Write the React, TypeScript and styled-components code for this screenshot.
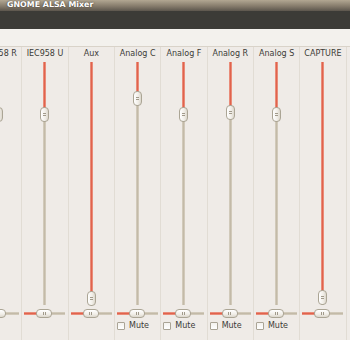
import React from "react";
import styled, { createGlobalStyle } from "styled-components";

const GlobalStyle = createGlobalStyle`
  html, body {
    margin: 0;
    padding: 0;
  }
  body {
    width: 350px;
    height: 340px;
    overflow: hidden;
    background: #efebe7;
    font-family: "DejaVu Sans", sans-serif;
  }
`;

const Window = styled.div`
  width: 350px;
  height: 340px;
  overflow: hidden;
  display: flex;
  flex-direction: column;
  background: #efebe7;
`;

const TitleBar = styled.div`
  height: 11px;
  flex: none;
  padding-left: 7px;
  background: linear-gradient(#b2a792, #867c6c 55%, #5c564d);
  color: #fff;
  font-family: "DejaVu Sans", sans-serif;
  font-weight: bold;
  font-size: 7.9px;
  line-height: 9px;
  text-shadow: 0 0 2px #3a352e;
  white-space: nowrap;
  overflow: hidden;
`;

const MenuBand = styled.div`
  height: 18px;
  flex: none;
  background: #3c3b37;
`;

const Toolbar = styled.div`
  height: 17px;
  flex: none;
  background: #f3f1ed;
  border-bottom: 1px solid #d9d3c9;
`;

// the strip list is scrolled a little, so the first channel is cut at the left
const Mixer = styled.div`
  flex: 1;
  display: flex;
  margin-left: -24px;
`;

const Column = styled.div`
  flex: none;
  width: 46.33px;
  box-sizing: border-box;
  border-right: 1px solid #e1dcd4;
  display: flex;
  flex-direction: column;
  align-items: center;
`;

const Label = styled.div`
  height: 13px;
  line-height: 13px;
  font-size: 8px;
  color: #3c3b37;
  white-space: nowrap;
`;

const VSlider = styled.div`
  position: relative;
  margin-top: 2px;
  width: 11px;
  height: 243px;
  display: flex;
  justify-content: center;
`;

const VTrough = styled.div`
  width: 3px;
  height: 100%;
  display: flex;
  flex-direction: column;
`;

const RedV = styled.div`
  flex: none;
  background: linear-gradient(to right, #eea08f, #e0634d, #eea08f);
`;

const BeigeV = styled.div`
  flex: 1;
  background: linear-gradient(to right, #d8d1c3, #c3baa8, #d8d1c3);
`;

const VThumb = styled.div`
  position: absolute;
  left: 1px;
  width: 9px;
  height: 15px;
  box-sizing: border-box;
  border: 1px solid #aba595;
  border-radius: 4px;
  background: linear-gradient(to right, #ffffff, #f1eee8 60%, #dcd7cc);
  display: flex;
  flex-direction: column;
  align-items: center;
  justify-content: center;
  gap: 1px;
  &::before,
  &::after {
    content: "";
    width: 3px;
    height: 1px;
    background: #a19a8b;
  }
`;

const HSlider = styled.div`
  position: relative;
  margin-top: 4px;
  width: 41px;
  height: 9px;
  display: flex;
  align-items: center;
`;

const HTrough = styled.div`
  width: 100%;
  height: 3px;
  display: flex;
`;

const RedH = styled.div`
  width: 50%;
  background: linear-gradient(#eea08f, #e0634d, #eea08f);
`;

const BeigeH = styled.div`
  flex: 1;
  background: linear-gradient(#d8d1c3, #c3baa8, #d8d1c3);
`;

const HThumb = styled.div`
  position: absolute;
  left: 12px;
  top: 0;
  width: 16px;
  height: 9px;
  box-sizing: border-box;
  border: 1px solid #aba595;
  border-radius: 4px;
  background: linear-gradient(#ffffff, #f1eee8 60%, #dcd7cc);
  display: flex;
  align-items: center;
  justify-content: center;
  gap: 1px;
  &::before,
  &::after {
    content: "";
    width: 1px;
    height: 3px;
    background: #a19a8b;
  }
`;

const MuteRow = styled.label`
  align-self: flex-start;
  margin-top: 3px;
  padding-left: 2px;
  height: 9px;
  display: flex;
  align-items: center;
  gap: 4px;
  font-size: 8px;
  color: #3c3b37;
`;

const Check = styled.span`
  width: 8px;
  height: 8px;
  box-sizing: border-box;
  border: 1px solid #aaa496;
  border-radius: 1px;
  background: linear-gradient(#f4f2ee, #ffffff);
`;

type Channel = { name: string; pos: number; mute: boolean };

const channels: Channel[] = [
  { name: "IEC958 R", pos: 52, mute: false },
  { name: "IEC958 U", pos: 52, mute: false },
  { name: "Aux", pos: 236, mute: false },
  { name: "Analog C", pos: 36, mute: true },
  { name: "Analog F", pos: 52, mute: true },
  { name: "Analog R", pos: 50, mute: true },
  { name: "Analog S", pos: 52, mute: true },
  { name: "CAPTURE", pos: 235, mute: false },
];

function Strip({ ch }: { ch: Channel }) {
  return (
    <Column>
      <Label>{ch.name}</Label>
      <VSlider>
        <VTrough>
          <RedV style={{ height: ch.pos }} />
          <BeigeV />
        </VTrough>
        <VThumb style={{ top: ch.pos - 7 }} />
      </VSlider>
      <HSlider>
        <HTrough>
          <RedH />
          <BeigeH />
        </HTrough>
        <HThumb />
      </HSlider>
      {ch.mute && (
        <MuteRow>
          <Check />
          Mute
        </MuteRow>
      )}
    </Column>
  );
}

export default function App() {
  return (
    <Window>
      <GlobalStyle />
      <TitleBar>GNOME ALSA Mixer</TitleBar>
      <MenuBand />
      <Toolbar />
      <Mixer>
        {channels.map((ch) => (
          <Strip key={ch.name} ch={ch} />
        ))}
      </Mixer>
    </Window>
  );
}
